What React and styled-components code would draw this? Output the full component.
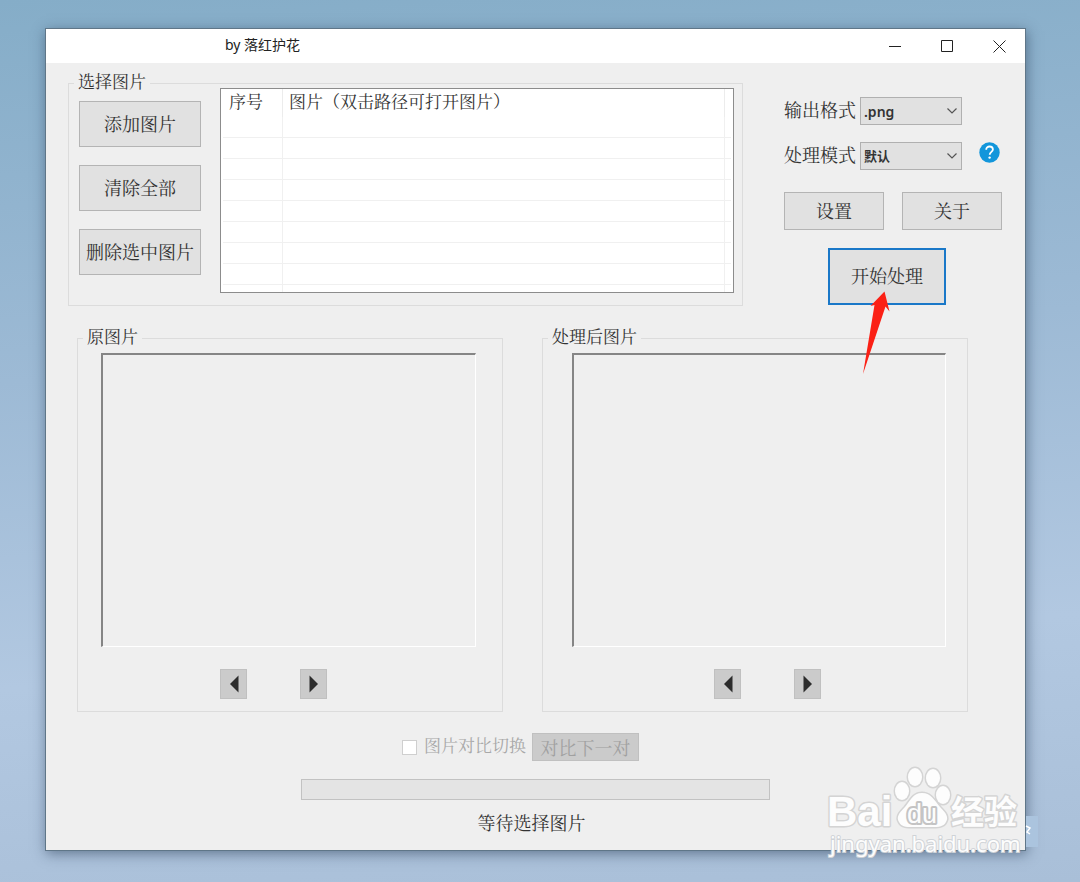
import { useState } from "react";
import styled, { createGlobalStyle } from "styled-components";

const songti = `"Liberation Serif", "Noto Serif CJK SC", "Noto Sans CJK SC", serif`;
const heiti = `"Noto Sans", "Noto Sans CJK SC", sans-serif`;

const GlobalStyle = createGlobalStyle`
  *, *::before, *::after {
    box-sizing: border-box;
  }
  body {
    margin: 0;
  }
  button, select {
    font-family: inherit;
  }
`;

const Desktop = styled.div`
  display: flex;
  min-height: 100vh;
  padding: 28px 54px 31px 45px;
  background: linear-gradient(
    176deg,
    #85adc8 0%,
    #9dbad5 40%,
    #b2c8e1 72%,
    #a9bfd8 100%
  );
  font-family: ${songti};
  color: #333;
`;

const Window = styled.div`
  position: relative;
  flex: 1;
  min-width: 0;
  border: 1px solid #5f7688;
  background: #efefef;
  box-shadow: 1px 3px 12px rgba(30, 50, 75, 0.5);
`;

const TitleBar = styled.header`
  display: flex;
  align-items: center;
  height: 34px;
  padding-left: 179px;
  background: #fff;
`;

const Title = styled.h1`
  flex: 1;
  margin: 0;
  padding-bottom: 3px;
  font-family: ${heiti};
  font-size: 14px;
  font-weight: 400;
  line-height: 20px;
  color: #222;
`;

const WindowButton = styled.button`
  display: flex;
  align-items: center;
  justify-content: center;
  width: 52px;
  height: 32px;
  padding: 0;
  border: 0;
  background: transparent;
  color: #222;
`;

const TopRow = styled.section`
  display: grid;
  grid-template-columns: 1fr auto;
  gap: 41px;
  padding: 10px 23px 0 22px;
`;

const Group = styled.fieldset`
  min-width: 0;
  margin: 0;
  padding: 0 8px 12px 10px;
  border: 1px solid #dcdcdc;
`;

const Legend = styled.legend`
  margin-left: -5px;
  padding: 0 4px;
  font-size: 17px;
  line-height: 20px;
`;

const PickerBody = styled.div`
  display: flex;
  gap: 19px;
  margin-top: -5px;
`;

const ButtonColumn = styled.div`
  display: flex;
  flex-direction: column;
  gap: 18px;
  padding-top: 13px;
`;

const Button = styled.button`
  height: ${(p) => (p.$large ? 46 : 38)}px;
  width: ${(p) => (p.$large ? 122 : 100)}px;
  padding: 0 0 3px;
  border: 1px solid #b4b4b4;
  background: #e1e1e1;
  color: #333;
  font-size: 18px;
  white-space: nowrap;
`;

const ListBox = styled.div`
  flex: 1;
  height: 205px;
  padding: 0 2px;
  overflow: hidden;
  border: 1px solid #8c8c8c;
  background: #fff;
`;

const Table = styled.table`
  width: 100%;
  table-layout: fixed;
  border-spacing: 0;

  th {
    height: 28px;
    padding: 0 6px;
    border-right: 1px solid #ececec;
    font-size: 17px;
    font-weight: 400;
    line-height: 20px;
    text-align: left;
    white-space: nowrap;
  }
  td {
    height: 21px;
    padding: 0;
    border-right: 1px solid #f0f0f0;
    border-bottom: 1px solid #f0f0f0;
  }
  th:last-child,
  td:last-child {
    padding: 0;
    border-right: 0;
  }
`;

const Column = styled.col`
  width: ${(p) => p.$width};
`;

const Settings = styled.div`
  display: flex;
  flex-direction: column;
  width: 218px;
  padding-top: 24px;
`;

const Field = styled.div`
  display: flex;
  align-items: center;
  height: 28px;
  margin-bottom: 17px;
  font-size: 18px;

  label {
    width: 76px;
    line-height: 24px;
    white-space: nowrap;
  }
`;

const SelectWrap = styled.span`
  display: grid;
  align-items: center;
  width: 102px;

  > * {
    grid-area: 1 / 1;
  }
  svg {
    justify-self: end;
    margin-right: 4px;
    pointer-events: none;
  }
`;

const Select = styled.select`
  appearance: none;
  width: 100%;
  height: 28px;
  padding: 0 3px;
  border: 1px solid #b0b0b0;
  border-radius: 0;
  background: #e1e1e1;
  color: #333;
  font-family: ${heiti};
  font-size: ${(p) => p.$size}px;
  font-weight: 600;
`;

const HelpButton = styled.button`
  width: 21px;
  height: 21px;
  margin: 0 0 7px 17px;
  padding: 0;
  border: 0;
  background: transparent;

  svg {
    display: block;
  }
`;

const ButtonRow = styled.div`
  display: flex;
  justify-content: space-between;
  margin-top: 5px;
`;

const StartArea = styled.div`
  position: relative;
  align-self: center;
  margin: 18px 12px 0 0;
`;

const StartButton = styled(Button)`
  display: block;
  width: 118px;
  height: 57px;
  border: 2px solid #1a78c8;
`;

const Pointer = styled.svg`
  position: absolute;
  top: 43px;
  left: 34px;
  pointer-events: none;
`;

const Previews = styled.section`
  display: grid;
  grid-template-columns: 1fr 1fr;
  gap: 39px;
  padding: 22px 57px 0 31px;
`;

const PreviewGroup = styled(Group)`
  padding: 0 0 12px 10px;
`;

const PreviewBody = styled.div`
  padding: ${(p) => (p.$shifted ? "5px 21px 0 19px" : "5px 26px 0 13px")};
`;

const Canvas = styled.div`
  height: 294px;
  border: solid;
  border-width: 2px 1px 1px 2px;
  border-color: #858585 #fff #fff #858585;
`;

const Pager = styled.div`
  display: flex;
  justify-content: center;
  gap: 53px;
  padding: ${(p) => (p.$shifted ? "22px 0 0 17px" : "22px 30px 0 0")};
`;

const ArrowButton = styled.button`
  display: flex;
  align-items: center;
  justify-content: center;
  width: 27px;
  height: 30px;
  padding: 0;
  border: 1px solid #c0c0c0;
  background: #cbcbcb;
`;

const Footer = styled.footer`
  display: flex;
  flex-direction: column;
  align-items: center;
  padding-top: 21px;
`;

const CompareRow = styled.div`
  display: flex;
  align-items: center;
  gap: 6px;
  padding-right: 30px;
`;

const CheckLabel = styled.label`
  display: flex;
  align-items: center;
  gap: 7px;
  color: #a8a8a8;
  font-size: 17px;
  line-height: 24px;
`;

const Checkbox = styled.input`
  appearance: none;
  width: 15px;
  height: 15px;
  margin: 0;
  border: 1px solid #cfcfcf;
  background: #fff;
`;

const CompareButton = styled(Button)`
  width: 107px;
  height: 28px;
  border-color: #c0c0c0;
  background: #cbcbcb;
  color: #a0a0a0;
`;

const Progress = styled.progress`
  appearance: none;
  width: 48%;
  height: 21px;
  margin-top: 18px;
  border: 1px solid #c2c2c2;
  background: #e4e4e4;

  &::-webkit-progress-bar {
    background: #e4e4e4;
  }
  &::-webkit-progress-value {
    background: #06b025;
  }
`;

const Status = styled.p`
  margin: 11px 8px 0 0;
  font-size: 18px;
  line-height: 26px;
`;

const Watermark = styled.svg`
  position: absolute;
  right: -14px;
  bottom: -15px;
  pointer-events: none;
`;

const Dropdown = ({ id, label, options, size, children }) => (
  <Field>
    <label htmlFor={id}>{label}</label>
    <SelectWrap>
      <Select id={id} $size={size}>
        {options.map((option) => (
          <option key={option}>{option}</option>
        ))}
      </Select>
      <svg width="12" height="8" viewBox="0 0 12 8">
        <path d="M1.5 1.5 6 6l4.500-4.500" fill="none" stroke="#555" strokeWidth="1.2" />
      </svg>
    </SelectWrap>
    {children}
  </Field>
);

const Preview = ({ title, shifted }) => (
  <PreviewGroup>
    <Legend>{title}</Legend>
    <PreviewBody $shifted={shifted}>
      <Canvas />
      <Pager $shifted={shifted}>
        <ArrowButton aria-label="上一张">
          <svg width="10" height="18" viewBox="0 0 10 18">
            <path d="M9.5 0.5v17L1 9z" fill="#2c2c2c" />
          </svg>
        </ArrowButton>
        <ArrowButton aria-label="下一张">
          <svg width="10" height="18" viewBox="0 0 10 18">
            <path d="M0.5 0.5v17L9 9z" fill="#2c2c2c" />
          </svg>
        </ArrowButton>
      </Pager>
    </PreviewBody>
  </PreviewGroup>
);

const BaiduMark = () => (
  <Watermark width="214" height="106" viewBox="0 0 214 106">
    <rect x="201" y="57" width="12" height="31" fill="#abc4de" />
    <path d="M201 67l4 2-3 4 3 2" fill="none" stroke="#fff" strokeWidth="1.5" />
    <g
      fill="#fdfdfd"
      stroke="#d4d4d4"
      strokeWidth="3"
      strokeLinejoin="round"
      paintOrder="stroke"
    >
      <text x="2" y="67" fontFamily="Liberation Sans" fontWeight="700" fontSize="42">
        Bai
      </text>
      <ellipse cx="77" cy="32" rx="7" ry="9" />
      <ellipse cx="90" cy="18" rx="7" ry="9" />
      <ellipse cx="108" cy="19" rx="7" ry="9" />
      <ellipse cx="118" cy="36" rx="7" ry="9" />
      <path d="M97 34c9 0 13 8 18 14 6 6 9 10 6 15-3 6-10 5-24 5s-20 1-23-5c-3-5 0-9 6-15 5-6 8-14 17-14z" />
      <text x="126" y="65" fontFamily="Noto Sans CJK SC" fontWeight="700" fontSize="33">
        经验
      </text>
    </g>
    <text
      x="82"
      y="64"
      fill="#fdfdfd"
      stroke="#c4c4c4"
      strokeWidth="4"
      strokeLinejoin="round"
      paintOrder="stroke"
      fontFamily="Liberation Sans"
      fontSize="27"
    >
      du
    </text>
    <text
      x="5"
      y="93"
      fill="#fdfdfd"
      stroke="#cfd3d7"
      strokeWidth="2"
      paintOrder="stroke"
      fontFamily="Noto Sans"
      fontSize="22"
    >
      jingyan.baidu.com
    </text>
  </Watermark>
);

const App = () => {
  const [compare, setCompare] = useState(false);

  return (
    <Desktop>
      <GlobalStyle />
      <Window>
        <TitleBar>
          <Title>by 落红护花</Title>
          <WindowButton aria-label="最小化">
            <svg width="12" height="12" viewBox="0 0 12 12">
              <path d="M0 6.5h12" stroke="currentColor" />
            </svg>
          </WindowButton>
          <WindowButton aria-label="最大化">
            <svg width="12" height="12" viewBox="0 0 12 12">
              <path d="M0.5 0.5h11v11h-11z" fill="none" stroke="currentColor" />
            </svg>
          </WindowButton>
          <WindowButton aria-label="关闭">
            <svg width="13" height="13" viewBox="0 0 13 13">
              <path d="M0.5 0.5l12 12M12.5 0.5l-12 12" stroke="currentColor" />
            </svg>
          </WindowButton>
        </TitleBar>

        <TopRow>
          <Group>
            <Legend>选择图片</Legend>
            <PickerBody>
              <ButtonColumn>
                <Button $large>添加图片</Button>
                <Button $large>清除全部</Button>
                <Button $large>删除选中图片</Button>
              </ButtonColumn>
              <ListBox>
                <Table>
                  <colgroup>
                    <Column $width="60px" />
                    <Column $width="auto" />
                    <Column $width="6px" />
                  </colgroup>
                  <thead>
                    <tr>
                      <th>序号</th>
                      <th>图片（双击路径可打开图片）</th>
                      <th />
                    </tr>
                  </thead>
                  <tbody>
                    {Array.from({ length: 9 }, (_, i) => (
                      <tr key={i}>
                        <td />
                        <td />
                        <td />
                      </tr>
                    ))}
                  </tbody>
                </Table>
              </ListBox>
            </PickerBody>
          </Group>

          <Settings>
            <Dropdown id="format" label="输出格式" size={14} options={[".png", ".jpg"]} />
            <Dropdown id="mode" label="处理模式" size={13} options={["默认"]}>
              <HelpButton aria-label="帮助">
                <svg width="21" height="21" viewBox="0 0 21 21">
                  <circle cx="10.5" cy="10.5" r="10.2" fill="#1296db" />
                  <path
                    d="M7.2 7.8c0-2 1.400-3.300 3.400-3.300s3.300 1.200 3.300 2.900c0 2.400-3.200 2.500-3.200 5.300"
                    fill="none"
                    stroke="#fff"
                    strokeWidth="1.8"
                  />
                  <circle cx="10.6" cy="15.6" r="1.2" fill="#fff" />
                </svg>
              </HelpButton>
            </Dropdown>
            <ButtonRow>
              <Button>设置</Button>
              <Button>关于</Button>
            </ButtonRow>
            <StartArea>
              <StartButton>开始处理</StartButton>
              <Pointer width="30" height="86" viewBox="0 0 30 86">
                <path d="M22.5 0.5 8.5 15l4-1L1 83l22.500-67.500 4 5z" fill="#fb2015" />
              </Pointer>
            </StartArea>
          </Settings>
        </TopRow>

        <Previews>
          <Preview title="原图片" />
          <Preview title="处理后图片" shifted />
        </Previews>

        <Footer>
          <CompareRow>
            <CheckLabel>
              <Checkbox
                type="checkbox"
                disabled
                checked={compare}
                onChange={(e) => setCompare(e.target.checked)}
              />
              图片对比切换
            </CheckLabel>
            <CompareButton disabled>对比下一对</CompareButton>
          </CompareRow>
          <Progress value={0} max={100} aria-label="处理进度" />
          <Status>等待选择图片</Status>
        </Footer>

        <BaiduMark />
      </Window>
    </Desktop>
  );
};

export default App;
